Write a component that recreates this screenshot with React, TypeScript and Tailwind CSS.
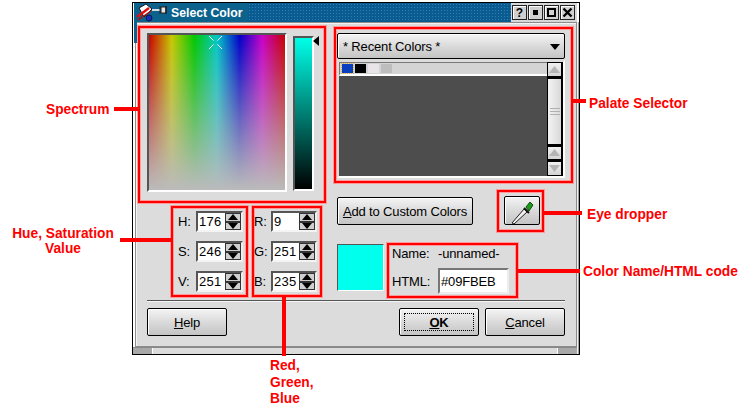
import React from "react";

const RED = "border-2 border-[#ff0000] shadow-[0_0_0_1px_#ff9a9a,inset_0_0_0_1px_#ff9a9a]";
const BTN = "border border-black rounded-[2px] pt-[2px] bg-[linear-gradient(to_bottom,#f4f4f4,#d8d8d8_55%,#c4c4c4)] shadow-[inset_1px_1px_0_#ffffff] flex items-center justify-center";

function Spin({ value, w }: { value: string; w: string }) {
  return (
    <div className={`flex h-[21px] ${w} border-2 border-t-[#555555] border-l-[#555555] border-r-[#eeeeee] border-b-[#f4f4f4] bg-white`}>
      <span className="flex-1 pl-[1px] leading-[18px] text-black tracking-[0.3px]">{value}</span>
      <div className="flex flex-col w-[16px] shrink-0 bg-[#666666]">
        <div className="h-[9px] bg-[#cfcfcf] border border-[#333333] flex items-center justify-center">
          <svg width="10" height="6" viewBox="0 0 10 6"><path d="M5 0 10 6H0Z" fill="#000" /></svg>
        </div>
        <div className="h-[9px] bg-[#cfcfcf] border border-[#333333] flex items-center justify-center">
          <svg width="10" height="6" viewBox="0 0 10 6"><path d="M5 6 10 0H0Z" fill="#000" /></svg>
        </div>
      </div>
    </div>
  );
}

function SpinRow({ label, value, labelW, w }: { label: string; value: string; labelW: string; w: string }) {
  return (
    <div className="flex items-center h-[21px]">
      <span className={`${labelW} text-black`}>{label}</span>
      <Spin value={value} w={w} />
    </div>
  );
}

function ScrollBtn({ dir, h }: { dir: "up" | "down"; h: string }) {
  return (
    <div className={`${h} w-[15px] border border-black bg-[linear-gradient(to_bottom,#f0f0f0,#d4d4d4)] flex items-center justify-center`}>
      <svg width="11" height="7" viewBox="0 0 11 7">
        <path d={dir === "up" ? "M5.5 0 11 7H0Z" : "M5.5 7 11 0H0Z"} fill="#b4b4b4" />
      </svg>
    </div>
  );
}

function TitleBtn({ children }: { children: React.ReactNode }) {
  return (
    <div className="w-[15px] h-[15px] border border-[#222222] bg-[#d0d0d0] shadow-[inset_1px_1px_0_#ffffff] flex items-center justify-center">
      {children}
    </div>
  );
}

export default function App() {
  return (
    <div className="relative w-[743px] h-[414px] bg-white overflow-hidden font-['Liberation_Sans',Arial,sans-serif] text-[13px] tracking-[-0.15px]">
      {/* window */}
      <div className="absolute left-[132px] top-[2px] w-[448px] h-[353px] border border-black bg-white flex flex-col">
        {/* title bar */}
        <div className="h-[19px] ml-[1px] mr-[2px] flex items-center bg-[#0b628c] shrink-0">
          <svg width="34" height="19" viewBox="0 0 34 19" className="ml-[1px] shrink-0">
            <path d="M4 5 11 1 17 6 9 14Z" fill="#fff" stroke="#111" strokeWidth="1" />
            <path d="M2 14 14 5" stroke="#e01010" strokeWidth="2.5" />
            <path d="M3 17 16 8" stroke="#b01010" strokeWidth="1.5" />
            <circle cx="14" cy="15" r="3" fill="#1030c0" stroke="#000" strokeWidth="0.6" />
            <path d="M17 7H25" stroke="#fff" strokeWidth="1.6" />
            <path d="M25 3V11M26 4H31V10H26Z" fill="#e6e6e6" stroke="#222" strokeWidth="1" />
            <path d="M31 3V11" stroke="#222" strokeWidth="1.5" />
          </svg>
          <span className="ml-[2px] mt-[2px] w-[74px] shrink-0 whitespace-nowrap font-bold text-white text-[12.25px] tracking-normal leading-none">Select Color</span>
          <div className="flex-1 self-stretch ml-[3px] bg-[#0a5c90] bg-[radial-gradient(#2f7fb8_0.7px,transparent_0.8px)] bg-[length:3px_3px]" />
          <div className="flex self-stretch items-center gap-[1px] bg-[#d8d8d8] pl-[1px] pr-[1px] w-[66px] shrink-0">
            <TitleBtn><span className="font-bold text-[12px] leading-none text-black tracking-normal">?</span></TitleBtn>
            <TitleBtn><div className="w-[5px] h-[5px] bg-black" /></TitleBtn>
            <TitleBtn><div className="w-[9px] h-[9px] border-2 border-black" /></TitleBtn>
            <TitleBtn>
              <svg width="11" height="11" viewBox="0 0 11 11"><path d="M1.5 1.5 9.5 9.5M9.5 1.5 1.5 9.5" stroke="#000" strokeWidth="2.4" /></svg>
            </TitleBtn>
          </div>
        </div>

        {/* frame */}
        <div className="relative flex flex-col flex-1 border-l-2 border-l-white">
          <div className="flex flex-col h-[325px] w-[442px] mr-[1px] border border-[#8c8c8c] bg-[#dcdcdc] shadow-[inset_1px_1px_0_#f4f4f4]">
            <div className="flex h-[275px] pt-[3px] pl-[2px] gap-[8px]">
              {/* left column */}
              <div className="flex flex-col w-[188px]">
                <div className={`relative flex items-start h-[177px] ${RED}`}>
                  <div className="relative ml-[7px] mt-[5px] w-[140px] h-[159px] border-2 border-t-[#555555] border-l-[#555555] border-r-white border-b-white bg-[linear-gradient(to_bottom,transparent,#bbbbbb),linear-gradient(to_right,#c80000,#c8c800,#00c800,#00c8c8,#0000c8,#c800c8,#c80000)]">
                    <svg width="15" height="15" viewBox="0 0 15 15" className="absolute left-[59px] top-0">
                      <path d="M1 1 5.5 5.5M14 1 9.5 5.5M1 14 5.5 9.5M14 14 9.5 9.5" stroke="#fff" strokeWidth="1" />
                    </svg>
                  </div>
                  <div className="ml-[6px] mt-[8px] w-[21px] h-[155px] border-2 border-t-[#555555] border-l-[#555555] border-r-white border-b-white bg-[linear-gradient(to_bottom,#00ffe8,#000000)]" />
                  <svg width="6" height="10" viewBox="0 0 6 10" className="absolute left-[173px] top-[8px]"><path d="M6 0V10L0 5Z" fill="#000" /></svg>
                </div>
                <div className="flex mt-[3px] ml-[33px] gap-[4px]">
                  <div className={`w-[77px] h-[91px] pt-[3px] pl-[5px] flex flex-col gap-[9px] ${RED}`}>
                    <SpinRow label="H:" value="176" labelW="w-[18px]" w="w-[47px]" />
                    <SpinRow label="S:" value="246" labelW="w-[18px]" w="w-[47px]" />
                    <SpinRow label="V:" value="251" labelW="w-[18px]" w="w-[47px]" />
                  </div>
                  <div className={`w-[70px] h-[91px] pt-[3px] flex flex-col gap-[9px] ${RED}`}>
                    <SpinRow label="R:" value="9" labelW="w-[17px]" w="w-[46px]" />
                    <SpinRow label="G:" value="251" labelW="w-[17px]" w="w-[46px]" />
                    <SpinRow label="B:" value="235" labelW="w-[17px]" w="w-[46px]" />
                  </div>
                </div>
              </div>

              {/* right column */}
              <div className="flex flex-col w-[239px] mt-[1px]">
                <div className={`h-[156px] pl-[1px] pt-[4px] ${RED}`}>
                  <div className={`relative h-[26px] w-[228px] justify-start pl-[5px] ${BTN}`}>
                    <span className="text-black">* Recent Colors *</span>
                    <svg width="10" height="6" viewBox="0 0 10 6" className="absolute right-[4px] top-[10px]"><path d="M0 0H10L5 6Z" fill="#000" /></svg>
                  </div>
                  <div className="flex mt-[1px] w-[228px] h-[118px] bg-[#4d4d4d] border-2 border-t-[#dcdcdc] border-l-[#dcdcdc] border-r-white border-b-white">
                    <div className="flex-1">
                      <div className="flex items-center gap-[2px] pl-[2px] h-[14px] bg-[#d4d4d4] border-t border-t-[#777777] border-l border-l-[#777777] border-b-2 border-b-white">
                        <div className="w-[11px] h-[9px] bg-[#0a3fc0] outline-dotted outline-1 outline-[#e8b030]" />
                        <div className="w-[11px] h-[9px] bg-black" />
                        <div className="w-[11px] h-[9px] bg-[#e8e4e8]" />
                        <div className="w-[11px] h-[9px] bg-[#bdbdbd]" />
                      </div>
                    </div>
                    <div className="flex flex-col w-[16px] shrink-0 bg-black gap-[1px] pr-[1px]">
                      <ScrollBtn dir="up" h="h-[15px]" />
                      <div className="relative h-[68px] w-[15px] border border-black bg-[linear-gradient(to_right,#f4f4f4,#d8d8d8)]">
                        <div className="absolute left-[2px] top-[29px] w-[10px] h-[7px] border-y border-[#b0b0b0] flex items-center"><div className="w-full h-[1px] bg-[#b0b0b0]" /></div>
                      </div>
                      <ScrollBtn dir="up" h="h-[15px]" />
                      <ScrollBtn dir="down" h="h-[15px]" />
                    </div>
                  </div>
                </div>

                <div className="flex h-[42px] mt-[7px]">
                  <div className={`ml-[3px] mt-[7px] w-[136px] h-[28px] text-black ${BTN}`}>
                    <span><span className="underline">A</span>dd to Custom Colors</span>
                  </div>
                  <div className={`ml-[24px] w-[47px] h-[42px] pl-[5px] pt-[4px] ${RED}`}>
                    <div className={`w-[36px] h-[29px] ${BTN}`}>
                      <svg width="26" height="26" viewBox="0 0 26 26">
                        <path d="M3 24 15 10 18 13 5 25Z" fill="#f0f0f0" stroke="#222" strokeWidth="1" />
                        <path d="M15 9 20 14" stroke="#111" strokeWidth="2" />
                        <path d="M17 8 21 3 24 6 20 12Z" fill="#1c9a1c" stroke="#0c4c0c" strokeWidth="1" />
                      </svg>
                    </div>
                  </div>
                </div>

                <div className="flex h-[55px] mt-[11px]">
                  <div className="ml-[3px] mt-[1px] w-[47px] h-[47px] bg-[#00ffec] border border-t-[#555555] border-l-[#555555] border-r-white border-b-white" />
                  <div className={`relative ml-[3px] w-[131px] h-[55px] pl-[3px] ${RED}`}>
                    <div className="flex items-center h-[18px] text-black">
                      <span className="w-[46px]">Name:</span>
                      <span>-unnamed-</span>
                    </div>
                    <div className="flex items-center h-[26px] mt-[5px] text-black">
                      <span className="w-[46px] pt-[1px]">HTML:</span>
                      <div className="w-[71px] h-[26px] pl-[1px] pt-[1px] flex items-center border-2 border-t-[#777777] border-l-[#777777] border-r-[#eeeeee] border-b-[#eeeeee] bg-white">#09FBEB</div>
                    </div>
                  </div>
                </div>
              </div>
            </div>

            {/* separator */}
            <div className="ml-[11px] mt-[2px] w-[418px] h-[2px] border-t border-t-[#555555] border-b border-b-[#f4f4f4]" />

            {/* buttons */}
            <div className="flex ml-[11px] mt-[6px] w-[418px] text-black">
              <div className={`w-[80px] h-[28px] ${BTN}`}><span><span className="underline">H</span>elp</span></div>
              <div className="flex-1" />
              <div className={`relative w-[80px] h-[28px] font-bold ${BTN}`}>
                <div className="absolute inset-[4px] border border-dotted border-black" />
                <span><span className="underline">O</span>K</span>
              </div>
              <div className={`ml-[6px] w-[80px] h-[28px] ${BTN}`}><span><span className="underline">C</span>ancel</span></div>
            </div>
          </div>

          {/* resize grip */}
          <div className="flex flex-1 ml-[-2px] mr-[2px] border-t border-t-[#888888] bg-[#dcdcdc]">
            <div className="w-[20px] bg-[#a8a8a8] border-r border-r-white" />
            <div className="flex-1" />
            <div className="w-[20px] bg-[#a8a8a8] border-l border-l-white" />
          </div>
        </div>
        <div className="absolute left-[1px] top-[19px] w-[3px] h-[21px] bg-[#0b628c]" />
        <div className="absolute right-0 top-[19px] bottom-0 w-[2px] bg-[#a0a0a0] border-l border-l-[#f0f0f0]" />
      </div>

      {/* annotations */}
      <div className="absolute left-[114px] top-[107px] w-[26px] h-[4px] bg-[#ff0000]" />
      <div className="absolute left-[120px] top-[238px] w-[52px] h-[4px] bg-[#ff0000]" />
      <div className="absolute left-[282px] top-[297px] w-[4px] h-[59px] bg-[#ff0000]" />
      <div className="absolute left-[571px] top-[99px] w-[15px] h-[4px] bg-[#ff0000]" />
      <div className="absolute left-[544px] top-[211px] w-[38px] h-[4px] bg-[#ff0000]" />
      <div className="absolute left-[518px] top-[269px] w-[62px] h-[4px] bg-[#ff0000]" />

      <div className="absolute left-[46px] top-[102px] font-bold text-[13.75px] leading-[16px] tracking-normal text-[#ff0000]">Spectrum</div>
      <div className="absolute left-[12px] top-[226px] w-[102px] text-center whitespace-nowrap font-bold text-[13.75px] leading-[15px] tracking-normal text-[#ff0000]">Hue, Saturation<br />Value</div>
      <div className="absolute left-[270px] top-[358px] font-bold text-[13.75px] leading-[16.5px] tracking-normal text-[#ff0000]">Red,<br />Green,<br />Blue</div>
      <div className="absolute left-[589px] top-[96px] font-bold text-[13.75px] leading-[16px] tracking-normal text-[#ff0000]">Palate Selector</div>
      <div className="absolute left-[587px] top-[207px] font-bold text-[13.75px] leading-[16px] tracking-normal text-[#ff0000]">Eye dropper</div>
      <div className="absolute left-[583px] top-[264px] font-bold text-[13.75px] leading-[16px] tracking-normal text-[#ff0000]">Color Name/HTML code</div>
    </div>
  );
}
